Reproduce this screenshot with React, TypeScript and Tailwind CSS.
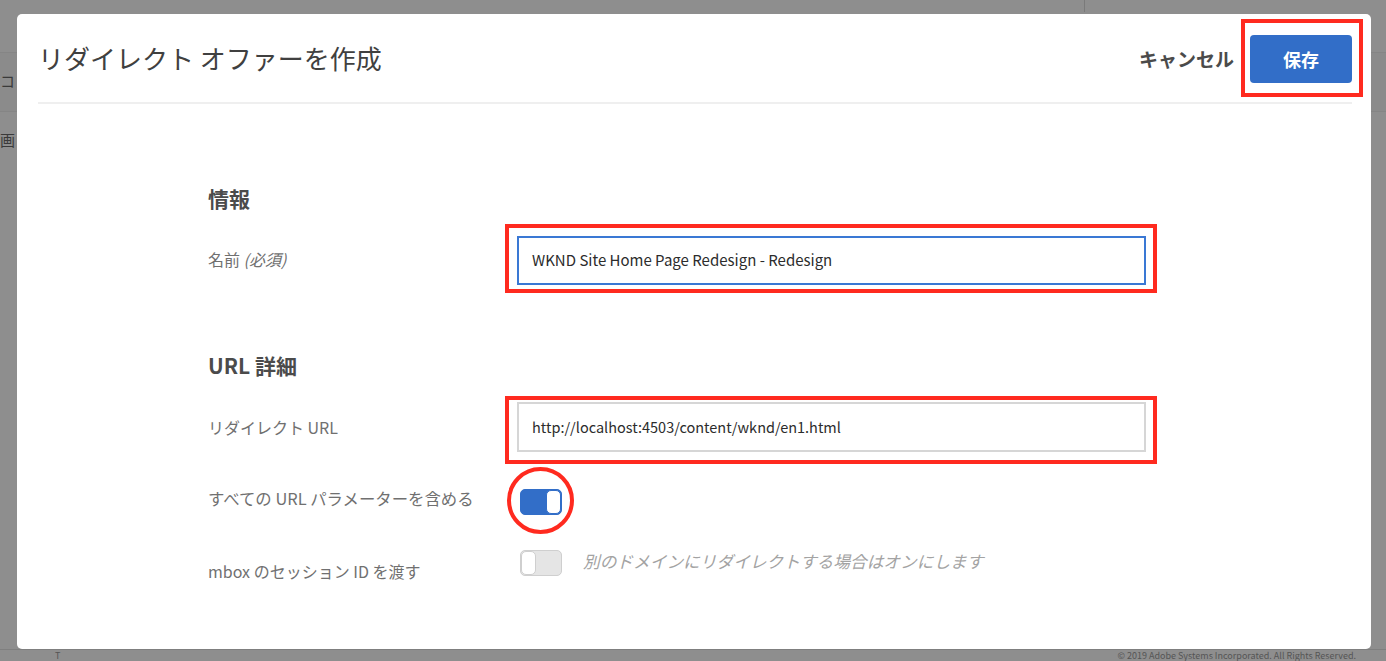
import React from "react";

const font = { fontFamily: '"Noto Sans CJK JP", "Noto Sans", sans-serif' };

function Toggle({ on }: { on: boolean }) {
  if (on) {
    return (
      <div className="flex h-[26px] w-[42px] justify-end rounded-[5px] border border-[#326ec8] bg-[#326ec8]">
        <div className="h-full w-[15px] rounded-[5px] border border-[#326ec8] bg-white" />
      </div>
    );
  }
  return (
    <div className="flex h-[26px] w-[42px] justify-start rounded-[5px] border border-[#cfcfcf] bg-[#e5e5e5]">
      <div className="h-full w-[15px] rounded-[5px] border border-[#cfcfcf] bg-white" />
    </div>
  );
}

export default function App() {
  return (
    <div className="relative h-[661px] w-[1386px] overflow-hidden bg-[#8e8e8e]" style={font}>
      {/* Page behind the dialog */}
      <div className="flex h-full flex-col text-[#3a3a3a]">
        <div className="flex h-[14px] items-start">
          <div className="ml-[1084px] h-[12px] border-l border-[#7a7a7a]" />
        </div>
        <div className="mt-[38px] h-[60px] border-y border-[#858585] bg-[#8b8b8b] pt-[20px] text-[15px] leading-none">
          コ·
        </div>
        <div className="mt-[20px] text-[15px] leading-none">画</div>
        <div className="mt-auto flex h-[12px] items-end border-t border-[#7f7f7f] pb-[1px] text-[9px] leading-none text-[#555]">
          <span className="ml-[55px]">T</span>
          <span className="ml-auto mr-[30px]">
            © 2019 Adobe Systems Incorporated. All Rights Reserved.
          </span>
        </div>
      </div>

      {/* Dialog */}
      <div className="absolute left-[17px] top-[14px] flex h-[635px] w-[1354px] flex-col rounded-[5px] bg-white">
        <div className="mx-[21px] mr-[19px] flex h-[90px] shrink-0 items-center border-b-2 border-[#efefef]">
          <h1 className="text-[26px] font-normal leading-none text-[#404040]">
            リダイレクト オファーを作成
          </h1>
          <div className="ml-auto flex items-center gap-[16px] pt-[2px]">
            <span className="text-[19px] font-bold text-[#4b4b4b]">キャンセル</span>
            <div className="relative">
              <button className="flex h-[48px] w-[102px] items-center justify-center rounded-[4px] bg-[#326ec8] text-[18px] font-bold text-white">
                保存
              </button>
              <div className="absolute -bottom-[14px] -left-[9px] -right-[11px] -top-[16px] border-4 border-[#ff2a1f]" />
            </div>
          </div>
        </div>

        <div className="ml-[191px] flex flex-col pt-[80px]">
          <h2 className="text-[21px] font-bold leading-[28px] text-[#4b4b4b]">情報</h2>

          <div className="mt-[12px] flex items-center">
            <div className="w-[297px] text-[16px] text-[#707070]">
              名前 <span className="italic">(必須)</span>
            </div>
            <div className="h-[69px] w-[652px] border-4 border-[#ff2a1f] pb-[4px] pl-[8px] pr-[7px] pt-[8px]">
              <div className="flex h-full items-center border-2 border-[#3a78d4] px-[13px] text-[15px] text-[#2c2c2c]">
                WKND Site Home Page Redesign - Redesign
              </div>
            </div>
          </div>

          <h2 className="mt-[58px] text-[21px] font-bold leading-[28px] text-[#4b4b4b]">URL 詳細</h2>

          <div className="mt-[17px] flex items-center">
            <div className="w-[297px] pb-[6px] text-[16px] text-[#707070]">リダイレクト URL</div>
            <div className="h-[68px] w-[652px] border-4 border-[#ff2a1f] pb-[8px] pl-[8px] pr-[7px] pt-[2px]">
              <div className="flex h-full items-center border-2 border-[#d6d6d6] px-[13px] text-[14.5px] text-[#2c2c2c]">
                http://localhost:4503/content/wknd/en1.html
              </div>
            </div>
          </div>

          <div className="mt-[22px] flex items-start">
            <div className="w-[312px] text-[16.4px] leading-[24px] text-[#707070]">
              すべての URL パラメーターを含める
            </div>
            <div className="relative mt-[3px]">
              <Toggle on />
              <div className="absolute -left-[13px] -top-[22px] h-[67px] w-[67px] rounded-full border-4 border-[#ff2a1f]" />
            </div>
          </div>

          <div className="mt-[34px] flex items-start">
            <div className="mt-[10px] w-[312px] text-[16px] leading-[24px] text-[#707070]">
              mbox のセッション ID を渡す
            </div>
            <div className="mt-[1px]">
              <Toggle on={false} />
            </div>
            <div className="ml-[21px] text-[16.7px] italic leading-[24px] text-[#a3a3a3]">
              別のドメインにリダイレクトする場合はオンにします
            </div>
          </div>
        </div>
      </div>
    </div>
  );
}
